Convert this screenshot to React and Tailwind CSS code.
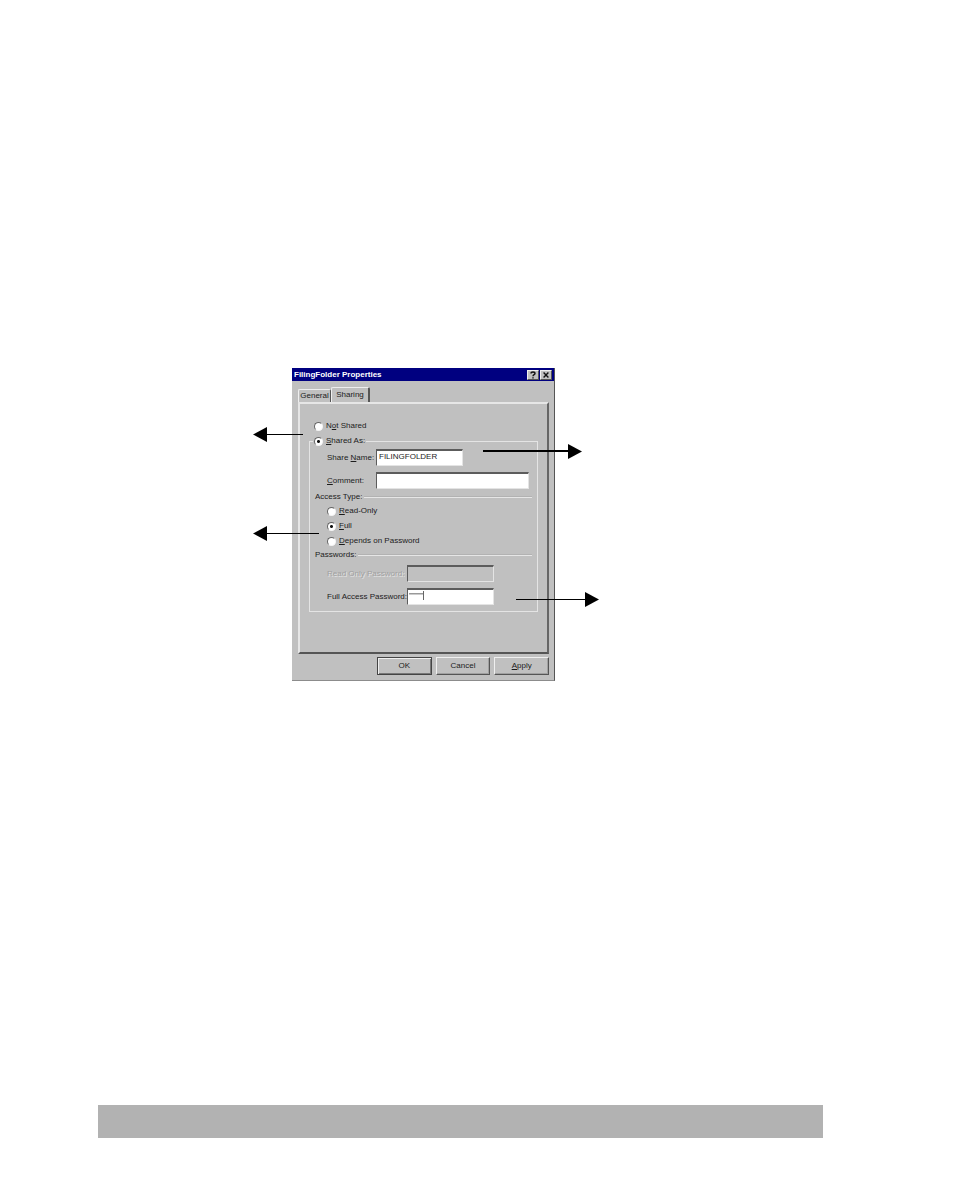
import React from "react";

const FIELD =
  "block h-[17px] rounded-none border-t-2 border-l border-r border-b border-t-[#5c5c5c] border-l-[#5c5c5c] border-r-[#e4e4e4] border-b-[#e4e4e4] px-[2px] pb-1 text-[8px] leading-[10px] outline-none";

const BEVEL =
  "border border-t-[#efefef] border-l-[#efefef] border-r-[#555555] border-b-[#555555]";

function Radio({ id, name, checked, children }) {
  return (
    <div className="flex h-[10px] items-center gap-[3px]">
      <input
        id={id}
        name={name}
        type="radio"
        defaultChecked={checked}
        className="size-[9px] shrink-0 appearance-none rounded-full border border-t-[#666666] border-l-[#666666] border-r-[#f4f4f4] border-b-[#f4f4f4] bg-white checked:bg-[radial-gradient(circle,#111111_0_1px,#ffffff_2px)]"
      />
      <label htmlFor={id} className="whitespace-nowrap">
        {children}
      </label>
    </div>
  );
}

function SectionTitle({ children }) {
  return (
    <div className="flex h-[10px] items-center gap-[2px] pl-[5px] pr-[5px]">
      <h2 className="whitespace-nowrap">{children}</h2>
      <div className="h-[2px] flex-1 border-t border-b border-t-[#b2b2b2] border-b-[#e6e6e6]" />
    </div>
  );
}

function PushButton({ primary, children }) {
  return (
    <button
      type="button"
      className={
        "h-[18px] flex-1 text-center leading-[14px] " +
        (primary
          ? "border border-[#444444] shadow-[inset_1px_1px_0_#efefef,inset_-1px_-1px_0_#777777]"
          : "border border-t-[#efefef] border-l-[#efefef] border-r-[#555555] border-b-[#555555] shadow-[inset_-1px_-1px_0_#a0a0a0]")
      }
    >
      {children}
    </button>
  );
}

function Arrow({ className, width, flip, weight = 1 }) {
  return (
    <svg
      className={"absolute " + className}
      width={width}
      height="15"
      viewBox={`0 0 ${width} 15`}
      aria-hidden="true"
    >
      <g transform={flip ? `translate(${width} 0) scale(-1 1)` : undefined}>
        <rect x="0" y={weight === 2 ? 6 : 7} width={width - 10} height={weight} />
        <path d={`M${width - 14} 0 L${width} 7.5 L${width - 14} 15 Z`} />
      </g>
    </svg>
  );
}

function PropertiesDialog() {
  return (
    <section
      aria-label="FilingFolder Properties"
      className="w-[263px] border-r border-b border-r-[#555555] border-b-[#8c8c8c] bg-[#c0c0c0] text-[8px] leading-[10px] text-[#1c1c1c]"
    >
      <header className="flex h-[13px] items-center bg-[#000080] pl-[2px] pr-[2px] text-white">
        <h1 className="flex-1 whitespace-nowrap font-bold">FilingFolder Properties</h1>
        <div className="flex gap-px">
          <button
            type="button"
            aria-label="Help"
            className={"flex h-[10px] w-[12px] items-center justify-center bg-[#c0c0c0] " + BEVEL}
          >
            <svg width="6" height="8" viewBox="0 0 6 8" fill="none" stroke="#111111" strokeWidth="1.4">
              <path d="M1 2.4C1 .5 5 .5 5 2.4 5 3.7 3 3.5 3 5.2M3 6.2V7.6" />
            </svg>
          </button>
          <button
            type="button"
            aria-label="Close"
            className={"flex h-[10px] w-[12px] items-center justify-center bg-[#c0c0c0] " + BEVEL}
          >
            <svg width="6" height="6" viewBox="0 0 6 6" stroke="#111111" strokeWidth="1.4">
              <path d="M.6 .6L5.4 5.4M5.4 .6L.6 5.4" />
            </svg>
          </button>
        </div>
      </header>

      <div className="pl-[6px] pr-[5px] pt-[6px] pb-[5px]">
        <div role="tablist" className="flex items-end">
          <button
            type="button"
            role="tab"
            aria-selected="false"
            className="h-[13px] w-[33px] rounded-t-[2px] border-t border-l border-r border-t-[#efefef] border-l-[#efefef] border-r-[#555555]"
          >
            General
          </button>
          <button
            type="button"
            role="tab"
            aria-selected="true"
            className="h-[15px] w-[39px] rounded-t-[2px] border-t border-l border-r-2 border-t-[#efefef] border-l-[#efefef] border-r-[#555555]"
          >
            Sharing
          </button>
        </div>

        <div
          role="tabpanel"
          className="border-t-2 border-l-2 border-r-2 border-b-2 border-t-[#e6e6e6] border-l-[#e6e6e6] border-r-[#666666] border-b-[#555555] px-[9px] pt-[17px] pb-[40px]"
        >
          <div className="pl-[5px]">
            <Radio id="not-shared" name="sharing">
              N<u>o</u>t Shared
            </Radio>
          </div>

          <fieldset className="mt-[5px] border border-[#e4e4e4] pb-[6px]">
            <legend className="ml-[3px] pl-px pr-px">
              <Radio id="shared-as" name="sharing" checked>
                <u>S</u>hared As:
              </Radio>
            </legend>

            <div className="mt-[3px] flex items-center pl-[17px]">
              <label htmlFor="share-name" className="w-[49px] whitespace-nowrap">
                Share <u>N</u>ame:
              </label>
              <input id="share-name" defaultValue="FILINGFOLDER" className={FIELD + " w-[87px] bg-white"} />
            </div>
            <div className="mt-[6px] flex items-center pl-[17px] pr-[8px]">
              <label htmlFor="comment" className="w-[49px] whitespace-nowrap">
                <u>C</u>omment:
              </label>
              <input id="comment" className={FIELD + " min-w-0 flex-1 bg-white"} />
            </div>

            <div className="mt-[3px]">
              <SectionTitle>Access Type:</SectionTitle>
            </div>
            <div className="mt-[4px] flex flex-col gap-[5px] pl-[17px]">
              <Radio id="read-only" name="access">
                <u>R</u>ead-Only
              </Radio>
              <Radio id="full" name="access" checked>
                <u>F</u>ull
              </Radio>
              <Radio id="depends" name="access">
                <u>D</u>epends on Password
              </Radio>
            </div>

            <div className="mt-[4px]">
              <SectionTitle>Passwords:</SectionTitle>
            </div>
            <div className="mt-[5px] flex items-center pl-[17px]">
              <label
                htmlFor="read-password"
                className="w-[80px] whitespace-nowrap text-[#a0a0a0] [text-shadow:1px_1px_0_#e4e4e4]"
              >
                Read Only Password:
              </label>
              <input id="read-password" type="password" disabled className={FIELD + " w-[87px] bg-[#c0c0c0]"} />
            </div>
            <div className="mt-[6px] flex items-center pl-[17px]">
              <label htmlFor="full-password" className="w-[80px] whitespace-nowrap">
                Full Access Password:
              </label>
              <div className="relative">
                <input id="full-password" type="password" className={FIELD + " w-[87px] bg-white"} />
                <svg
                  className="pointer-events-none absolute top-[3px] left-[2px]"
                  width="16"
                  height="10"
                  viewBox="0 0 16 10"
                  aria-hidden="true"
                >
                  <path d="M0 2H14V3.5H0Z" fill="#999999" />
                  <path d="M14 0H15V9H14Z" fill="#666666" />
                </svg>
              </div>
            </div>
          </fieldset>
        </div>

        <div className="mt-[3px] flex gap-[4px] pl-[79px]">
          <PushButton primary>OK</PushButton>
          <PushButton>Cancel</PushButton>
          <PushButton>
            <u>A</u>pply
          </PushButton>
        </div>
      </div>
    </section>
  );
}

export default function App() {
  return (
    <div className="flex min-h-screen flex-col bg-white pr-[131px] pb-[62px] pl-[98px] font-['Liberation_Sans',Arial,sans-serif]">
      <main className="pt-[368px] pb-8 pl-[155px]">
        <figure className="relative w-[346px] pl-[39px]">
          <PropertiesDialog />
          <Arrow className="top-[59px] left-0" width={50} flip />
          <Arrow className="top-[158px] left-0" width={66} flip />
          <Arrow className="top-[76px] left-[230px]" width={99} weight={2} />
          <Arrow className="top-[224px] left-[263px]" width={83} />
        </figure>
      </main>
      <footer className="mt-auto h-[33px] bg-[#b2b2b2]" />
    </div>
  );
}
